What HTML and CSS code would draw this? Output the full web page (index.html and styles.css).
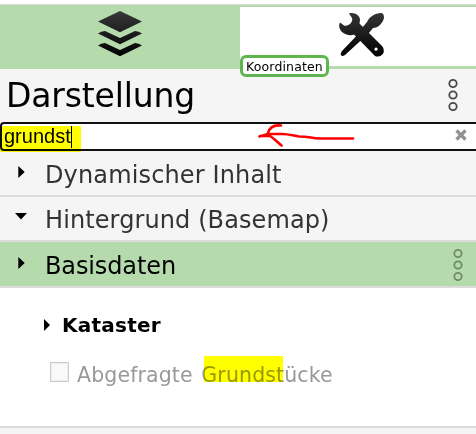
FILE: index.html
```html
<!DOCTYPE html>
<html lang="de">
<head>
<meta charset="utf-8">
<title>Darstellung</title>
<link rel="stylesheet" href="styles.css">
</head>
<body>
<nav class="tabs">
  <div class="tab">
    <svg width="48" height="50" viewBox="0 0 48 50">
      <defs><linearGradient id="ink" gradientUnits="userSpaceOnUse" x1="0" y1="2" x2="0" y2="48"><stop offset="0" stop-color="#383838"/><stop offset="1" stop-color="#000"/></linearGradient></defs>
      <g fill="url(#ink)">
        <path d="M24 2 46 12.500 24 23.200 2 12.500Z"/>
        <path d="M2 24.500 Q5 22 9 22 L24 29 39 22 Q43 22 46 24.500 L24 35.300Z"/>
        <path d="M2 36.500 Q5 34 9 34 L24 41 39 34 Q43 34 46 36.500 L24 47.300Z"/>
      </g>
    </svg>
  </div>
  <div class="tab tab-tools">
    <svg width="48" height="48" viewBox="0 0 48 48">
      <defs><linearGradient id="metal" gradientUnits="userSpaceOnUse" x1="0" y1="2" x2="0" y2="46"><stop offset="0" stop-color="#363636"/><stop offset="1" stop-color="#000"/></linearGradient></defs>
      <g fill="url(#metal)">
        <path d="M44 2 Q47 2 47 7 C46 12 41 17 36 17 L31 23 25 17 30 11 C32 6 38 2 44 2Z"/>
        <path d="M27 17 32 22 8 44 Q5 46 4 44 Q3 43 5 40Z"/>
        <path fill-rule="evenodd" d="M12 2.500 C17 1 23 4 23 9 L22.500 12.500 45 35 Q47.500 38 46.500 42 Q43 47 38 45 L17 23.500 C14 25 8 24 5 21 C2 18 1.500 14 3 11.500 L7 14.500 Q10 15.500 13 13 Q16 10 15 7Z M39 36.500 a1.600 1.600 0 1 0 .1 3.200 a1.600 1.600 0 1 0 -.1 -3.200Z"/>
      </g>
    </svg>
    <span class="tooltip">Koordinaten</span>
  </div>
</nav>
<header class="header">
  <h1><span class="title">Darstellung</span></h1>
  <svg class="dots" width="12" height="34" viewBox="0 0 12 34"><circle cx="6" cy="5.500" r="3.700"/><circle cx="6" cy="17" r="3.700"/><circle cx="6" cy="28.500" r="3.700"/></svg>
</header>
<div class="search">
  <span class="query">grundst</span><i class="caret"></i>
  <svg class="clear" width="12" height="12" viewBox="0 0 12 12"><path d="M1.500 1.500 10.500 10.500M10.500 1.500 1.500 10.500"/></svg>
  <i class="marker"></i>
  <svg class="arrow" width="100" height="28" viewBox="0 0 100 28"><path d="M97 15.500 64 15.500 C54 15 54 13.500 43 13.500 C35 12 32 11 26 11 L12 11 3.500 13.500 M25 2.500 C17 1.500 13 5 11.500 11 M4 13 L14 13 C19 16 21 19 25.500 22.500"/></svg>
</div>
<section class="row">
  <svg class="tri" width="12" height="12" viewBox="0 0 12 12"><path d="M3.300 0 9.700 6 3.300 12Z"/></svg>
  <span class="label l1">Dynamischer Inhalt</span>
</section>
<section class="row row-open">
  <svg class="tri" width="12" height="12" viewBox="0 0 12 12"><path d="M0 3 12 3 6 9.500Z"/></svg>
  <span class="label l2">Hintergrund (Basemap)</span>
</section>
<section class="row row-active">
  <svg class="tri" width="12" height="12" viewBox="0 0 12 12"><path d="M3.300 0 9.700 6 3.300 12Z"/></svg>
  <span class="label l3">Basisdaten</span>
  <svg class="dots dots-dim" width="12" height="34" viewBox="0 0 12 34"><circle cx="6" cy="5.500" r="3.700"/><circle cx="6" cy="17" r="3.700"/><circle cx="6" cy="28.500" r="3.700"/></svg>
</section>
<main class="content">
  <div class="group">
    <svg width="8" height="12" viewBox="0 0 8 12"><path d="M1 0 7 6 1 12Z"/></svg>
    <b class="group-name">Kataster</b>
  </div>
  <div class="layer">
    <i class="box"></i>
    <span class="layer-name">Abgefragte Grundstücke</span>
    <i class="hit"></i>
  </div>
</main>
</body>
</html>
```

FILE: styles.css
```css
* { box-sizing: border-box; }
body { margin: 0; padding-top: 4px; height: 434px; overflow: hidden; background: linear-gradient(#fff 0 4px, #f5f5f5 4px); font-family: "DejaVu Sans", Verdana, sans-serif; color: #000; }
svg { display: block; flex: none; }
.tabs { display: flex; height: 65px; border-top: 1px solid #dbdbdb; background: #b5dbac; }
.tab { width: 240px; display: flex; justify-content: center; padding-top: 4px; }
.tab-tools { position: relative; width: 236px; height: 59px; margin-top: 2px; padding: 4px 0 0 6px; background: #fff; }
.tooltip { position: absolute; left: 0; top: 48px; width: 89px; height: 22px; border: 3px solid #5fb651; border-radius: 6px; background: #fff; font-size: 12.5px; letter-spacing: 0.15px; line-height: 17px; padding-left: 3px; white-space: nowrap; }
.header { display: flex; height: 53px; padding: 0 17px 0 6px; justify-content: space-between; }
h1 { margin: 0; font-size: 33px; line-height: 53px; font-weight: 400; letter-spacing: -0.15px; }
.dots { margin-top: 9px; fill: none; stroke: #484848; stroke-width: 1.8; }
.dots-dim { margin: 6px 12px 0 auto; stroke: #71896b; }
.search { position: relative; display: flex; align-items: center; height: 29px; width: 480px; padding: 0 11px 0 2px; border: 2px solid #101010; border-radius: 4px; background: #fff; font: 20px "Liberation Sans", Arial, sans-serif; }
.caret { width: 1px; height: 22px; background: #000; }
.clear { margin: -3px 0 0 auto; stroke: #919191; stroke-width: 3.2; fill: none; }
.marker { position: absolute; left: -2px; top: 2px; width: 81px; height: 26px; background: #ff0; mix-blend-mode: multiply; }
.arrow { position: absolute; left: 254px; top: -1px; fill: none; stroke: #f00; stroke-width: 2.6; stroke-linecap: round; stroke-linejoin: round; }
.row { display: flex; height: 46px; padding-left: 15px; border-bottom: 2px solid #dbdbdb; color: #333; }
.row-open { height: 45px; }
.row-active { background: #b5dbac; color: #000; }
.tri { margin-top: 15px; fill: #000; }
.row-open .tri { margin-top: 13px; }
.label { margin-left: 18px; font-size: 24px; line-height: 48px; white-space: nowrap; }
.l1 { letter-spacing: 0.14px; }
.l2 { line-height: 46px; letter-spacing: 0.1px; }
.l3 { letter-spacing: -0.12px; }
.content { height: 140px; padding-top: 25px; background: #fff; border-bottom: 2px solid #dbdbdb; }
.group { display: flex; align-items: center; height: 24px; padding-left: 43px; }
.group-name { margin-left: 11px; font-size: 20px; letter-spacing: 0.25px; }
.layer { position: relative; display: flex; height: 26px; margin-top: 24px; padding-left: 50px; color: #999; }
.box { width: 19px; height: 20px; margin-top: 1px; border: 1px solid #ccc; outline: 1px solid #eee; outline-offset: -2px; background: #fafafa; }
.layer-name { margin-left: 8px; font-size: 20.5px; line-height: 28px; letter-spacing: 0.12px; word-spacing: 2px; white-space: nowrap; }
.hit { position: absolute; left: 204px; top: -5px; width: 79px; height: 26px; background: #ff0; mix-blend-mode: multiply; }
```
